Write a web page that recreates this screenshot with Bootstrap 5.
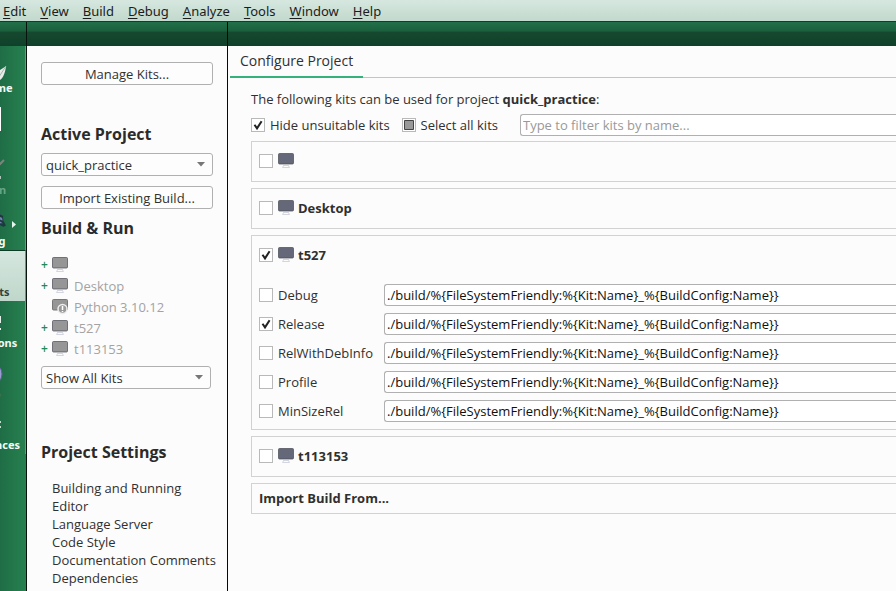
<!DOCTYPE html>
<html lang="en">
<head>
<meta charset="utf-8">
<meta name="viewport" content="width=device-width, initial-scale=1">
<title>Configure Project</title>
<link href="https://cdn.jsdelivr.net/npm/bootstrap@5.3.0/dist/css/bootstrap.min.css" rel="stylesheet">
<style>
body{font-family:"Open Sans","Noto Sans",sans-serif;font-size:13px;line-height:18px;color:#303030;background:#fcfcfc}
.menubar{height:22px;background:linear-gradient(#d6e7df,#c2d9cd);border-bottom:1px solid #123d28;padding-left:3px;gap:14px;font-family:"Noto Sans",sans-serif}
.menubar a{color:#1c1c1c;text-decoration:none;line-height:22px}
.menubar a::first-letter{text-decoration:underline;text-underline-offset:2px}
.rail{width:27px;background:linear-gradient(90deg,#1f6d46,#27804f);border-right:1px solid #06140d;overflow:hidden}
.strip{height:24px;background:linear-gradient(#217049 0,#1b5f3d 38%,#15492f 42%,#10402a);flex:none}
.rail .strip{width:100%}
.mode{width:76px;height:51px;margin-left:-50px;border:0;padding:1px 0 0;background:none;color:#f4fbf7;font-family:"Noto Sans",sans-serif;font-size:11px;font-weight:700;line-height:16px;flex:none;border-right:1px solid #58a27c}
.mode svg{width:40px;height:33px;flex:none}
.mode.current{background:linear-gradient(#d5e6de,#bfd7cb);color:#30423a;border-top:1px solid #0f3b26;padding-top:0}
.mode:disabled{color:#6aa486}
.side{width:201px;border-right:1px solid #080808}
.side-body{padding:16px 14px}
.side h2{font-size:16px;font-weight:700;line-height:22px;margin:0;color:#2b2b2b}
.side .h-active{margin-top:38px}
.side .h-build{margin-top:8px}
.side .h-settings{margin-top:52px}
.tool-btn,.combo{height:23px;padding:0 4px;border:1px solid #b0b0b0;border-radius:3px;font-size:13px;line-height:20px;color:#303030;background-color:#fdfdfd}
.import-btn{margin-top:10px}
.combo{background-image:url("data:image/svg+xml,%3Csvg xmlns='http://www.w3.org/2000/svg' viewBox='0 0 8 5'%3E%3Cpath d='M0 0h8L4 4.5z' fill='%23777'/%3E%3C/svg%3E");background-size:8px 5px;background-position:right 7px center}
.combo-kits{width:calc(100% - 2px);margin-top:7px}
.kit-list{margin-top:15px}
.kit-row{height:21px;color:#a3a3a3}
.kit-row span+svg+span{margin-left:6px}
.plus{width:11px;color:#1f8a55;font-size:12px;font-weight:600}
.mon{width:16px;height:16px;flex:none}
.dim{color:#969696}.lit{color:#656879}
.pages{padding-left:11px}
.pages a{color:#303030;text-decoration:none}
.tabs{height:32px;border-bottom:1px solid #c4c4c4;margin-left:2px}
.tab-btn{border:0;background:none;padding:0 10px;font-size:14px;border-bottom:2px solid #35b27c;height:32px;color:#303030}
.work{padding:12px 0 0 23px}
.filters{margin-top:6px}
.filters label{margin-left:5px}
.filters .form-control{margin-left:22px}
.filters label+.box{margin-left:12px}
.form-check-input.box{width:14px;height:14px;margin-top:0;border:1px solid #b9b9b9;border-radius:0;background-color:#fff;background-size:12px 12px;flex:none;float:none}
.box:checked{background-image:url("data:image/svg+xml,%3Csvg xmlns='http://www.w3.org/2000/svg' viewBox='0 0 12 12'%3E%3Cpath d='M2.5 5.8L5 9.4L9.6 2.2' fill='none' stroke='%23222' stroke-width='2'/%3E%3C/svg%3E")!important}
.form-check-input.box:indeterminate{background-color:#fff;border-color:#b9b9b9;background-image:url("data:image/svg+xml,%3Csvg xmlns='http://www.w3.org/2000/svg' viewBox='0 0 12 12'%3E%3Cpath d='M1.5 1.5h9v9h-9z' fill='%23999' stroke='%23444'/%3E%3C/svg%3E")}
.field{height:22px;padding:0 2px;border:1px solid #b0b0b0;border-right:0;border-radius:3px 0 0 3px;font-size:13px;line-height:20px;color:#101010;background:#fff;min-width:0}
.field::placeholder{color:#999}
.kits{gap:6px;margin-top:5px}
.kit{border:1px solid #d2d2d2;border-right:0;padding-left:7px}
.kit-head{height:39px;padding-bottom:2px;gap:5px;font-weight:700}
.kit-head label{margin-left:-1px}
.kit-head+.build{margin-top:5px}
.kit-import{line-height:29px}
.build{height:29px;gap:5px}
.build label{width:101px;flex:none}
</style>
<script src="https://cdn.jsdelivr.net/npm/bootstrap@5.3.0/dist/js/bootstrap.bundle.min.js"></script>
</head>
<body class="d-flex flex-column vh-100 overflow-hidden">
<svg class="d-none">
  <symbol id="mon" viewBox="0 0 16 16"><path d="M5.5 12.5h5M6 12l-1.500 2.500h7L10 12" fill="none" stroke="#d3d6de"/><rect x=".5" y=".5" width="15" height="10.500" rx="1" fill="currentColor" stroke="#4a4b55" stroke-opacity=".7"/></symbol>
</svg>
<nav class="menubar d-flex flex-shrink-0" aria-label="Main menu">
  <a class="d-block" href="#">Edit</a><a class="d-block" href="#">View</a><a class="d-block" href="#">Build</a><a class="d-block" href="#">Debug</a><a class="d-block" href="#">Analyze</a><a class="d-block" href="#">Tools</a><a class="d-block" href="#">Window</a><a class="d-block" href="#">Help</a>
</nav>
<div class="d-flex flex-grow-1 overflow-hidden">
  <nav class="rail d-flex flex-column flex-shrink-0" aria-label="Modes">
    <div class="strip"></div>
    <button class="mode d-flex flex-column align-items-center"><svg viewBox="-32 0 40 33"><path d="M6 19C2 22-4 24-9 34H-2C3 32 5 27 6 19z" fill="#e8ece9"/><path d="M6 19L-3 33" stroke="#a5b3ab"/></svg>Welcome</button>
    <button class="mode d-flex flex-column align-items-center"><svg viewBox="-32 0 40 33"><path d="M-24 9H1v24h-25z" fill="#fff"/></svg>Edit</button>
    <button class="mode d-flex flex-column align-items-center" disabled><svg viewBox="-32 0 40 33"><path d="M4 11L-5 20" stroke="#78877e" stroke-width="2"/><path d="M0 27v3" stroke="#a8c5b5" stroke-width="2"/></svg>Design</button>
    <button class="mode d-flex flex-column align-items-center position-relative"><svg viewBox="-32 0 40 33"><ellipse cx="-7" cy="20" rx="10" ry="8" fill="#7385ad" stroke="#263a4d"/><path d="M-2 15l5 2M-1 20l4 2 2 4M0 24l4 2" fill="none" stroke="#1d3940" stroke-width="2"/></svg>Debug<svg class="position-absolute end-0 top-0" style="width:14px;height:51px" viewBox="0 0 14 51"><path d="M1 22l4 3.500-4 3.500z" fill="#e8f4ee"/></svg></button>
    <button class="mode current d-flex flex-column align-items-center"><svg viewBox="-32 0 40 33"><path d="M-24 10H-2v20h-22z" fill="#8fa79b"/></svg>Projects</button>
    <button class="mode d-flex flex-column align-items-center"><svg viewBox="-32 0 40 33"><path d="M-20 14H1v7h-21zM-20 26H1v2h-21z" fill="#e3f0e9"/></svg>Extensions</button>
    <button class="mode d-flex flex-column align-items-center"><svg viewBox="-32 0 40 33"><circle cx="-9" cy="21" r="11" fill="#9a9bd0" stroke="#5d649b"/></svg>Help</button>
    <button class="mode d-flex flex-column align-items-center"><svg viewBox="-32 0 40 33"><path d="M-20 18H1M-20 23H1" stroke="#bfd9cb" stroke-width="2"/></svg>Preferences</button>
  </nav>
  <aside class="side flex-shrink-0">
    <div class="strip"></div>
    <div class="side-body">
      <button class="btn tool-btn w-100 d-block">Manage Kits...</button>
      <h2 class="h-active">Active Project</h2>
      <select class="form-select combo mt-2" aria-label="Active project"><option>quick_practice</option></select>
      <button class="btn tool-btn import-btn w-100 d-block">Import Existing Build...</button>
      <h2 class="h-build">Build &amp; Run</h2>
      <ul class="kit-list list-unstyled mb-0">
        <li class="kit-row d-flex align-items-center"><span class="plus">+</span><svg class="mon dim"><use href="#mon"/></svg></li>
        <li class="kit-row d-flex align-items-center"><span class="plus">+</span><svg class="mon dim"><use href="#mon"/></svg><span>Desktop</span></li>
        <li class="kit-row d-flex align-items-center"><span class="plus"></span><svg class="mon dim" viewBox="0 0 16 16"><rect x=".5" y=".5" width="15" height="10.500" rx="1" fill="currentColor" stroke="#777"/><circle cx="10.500" cy="10" r="4.500" fill="#999" stroke="#eee" stroke-width="1.500"/><path d="M10.500 7v4M10.500 12v1" stroke="#fff" stroke-width="1.500"/></svg><span>Python 3.10.12</span></li>
        <li class="kit-row d-flex align-items-center"><span class="plus">+</span><svg class="mon dim"><use href="#mon"/></svg><span>t527</span></li>
        <li class="kit-row d-flex align-items-center"><span class="plus">+</span><svg class="mon dim"><use href="#mon"/></svg><span>t113153</span></li>
      </ul>
      <select class="form-select combo combo-kits" aria-label="Kit filter"><option>Show All Kits</option></select>
      <h2 class="h-settings">Project Settings</h2>
      <nav class="pages d-flex flex-column mt-3" aria-label="Project settings">
        <a href="#">Building and Running</a><a href="#">Editor</a><a href="#">Language Server</a><a href="#">Code Style</a><a class="text-nowrap" href="#">Documentation Comments</a><a href="#">Dependencies</a>
      </nav>
    </div>
  </aside>
  <main class="flex-grow-1 overflow-hidden">
    <div class="strip"></div>
    <div class="tabs"><button class="tab-btn">Configure Project</button></div>
    <div class="work">
      <p class="mb-0">The following kits can be used for project <b>quick_practice</b>:</p>
      <div class="filters d-flex align-items-center">
        <input class="form-check-input box" type="checkbox" id="hide" checked><label for="hide">Hide unsuitable kits</label>
        <input class="form-check-input box" type="checkbox" id="all"><label for="all">Select all kits</label>
        <input class="form-control field flex-grow-1 w-auto" type="text" placeholder="Type to filter kits by name..." aria-label="Filter kits">
      </div>
      <div class="kits d-flex flex-column">
        <section class="kit"><div class="kit-head d-flex align-items-center"><input class="form-check-input box" type="checkbox" aria-label="Unnamed kit"><svg class="mon lit"><use href="#mon"/></svg></div></section>
        <section class="kit"><div class="kit-head d-flex align-items-center"><input class="form-check-input box" type="checkbox" id="k1"><svg class="mon lit"><use href="#mon"/></svg><label for="k1">Desktop</label></div></section>
        <section class="kit pb-1">
          <div class="kit-head d-flex align-items-center"><input class="form-check-input box" type="checkbox" id="k2" checked><svg class="mon lit"><use href="#mon"/></svg><label for="k2">t527</label></div>
          <div class="build d-flex align-items-center"><input class="form-check-input box" type="checkbox" id="b1"><label for="b1">Debug</label><input class="form-control field" aria-label="Debug directory" value="./build/%{FileSystemFriendly:%{Kit:Name}_%{BuildConfig:Name}}"></div>
          <div class="build d-flex align-items-center"><input class="form-check-input box" type="checkbox" id="b2" checked><label for="b2">Release</label><input class="form-control field" aria-label="Release directory" value="./build/%{FileSystemFriendly:%{Kit:Name}_%{BuildConfig:Name}}"></div>
          <div class="build d-flex align-items-center"><input class="form-check-input box" type="checkbox" id="b3"><label for="b3">RelWithDebInfo</label><input class="form-control field" aria-label="RelWithDebInfo directory" value="./build/%{FileSystemFriendly:%{Kit:Name}_%{BuildConfig:Name}}"></div>
          <div class="build d-flex align-items-center"><input class="form-check-input box" type="checkbox" id="b4"><label for="b4">Profile</label><input class="form-control field" aria-label="Profile directory" value="./build/%{FileSystemFriendly:%{Kit:Name}_%{BuildConfig:Name}}"></div>
          <div class="build d-flex align-items-center"><input class="form-check-input box" type="checkbox" id="b5"><label for="b5">MinSizeRel</label><input class="form-control field" aria-label="MinSizeRel directory" value="./build/%{FileSystemFriendly:%{Kit:Name}_%{BuildConfig:Name}}"></div>
        </section>
        <section class="kit"><div class="kit-head d-flex align-items-center"><input class="form-check-input box" type="checkbox" id="k3"><svg class="mon lit"><use href="#mon"/></svg><label for="k3">t113153</label></div></section>
        <section class="kit kit-import fw-bold">Import Build From...</section>
      </div>
    </div>
  </main>
</div>
<script>document.getElementById('all').indeterminate = true;</script>
</body>
</html>
